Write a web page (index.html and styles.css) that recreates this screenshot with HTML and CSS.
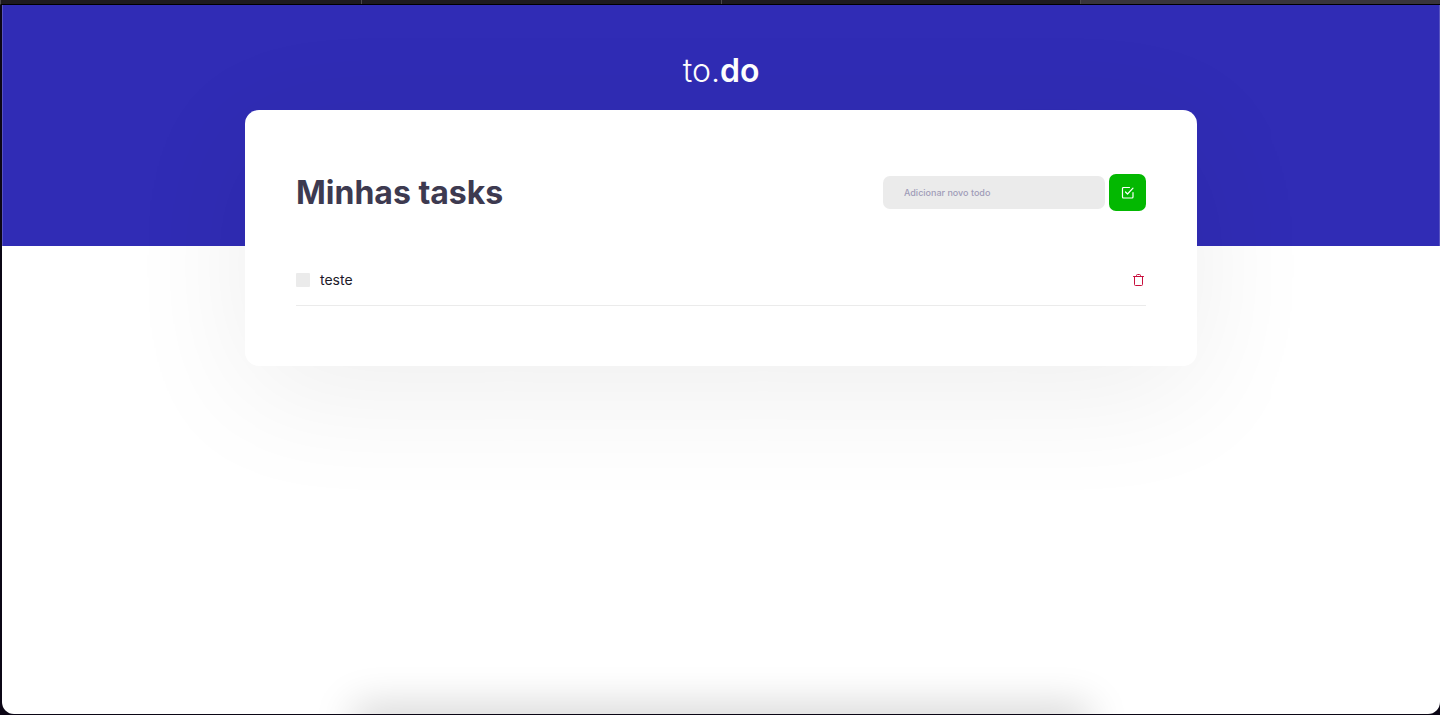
FILE: index.html
```html
<!DOCTYPE html>
<html lang="pt-BR">
<head>
<meta charset="utf-8">
<meta name="viewport" content="width=device-width, initial-scale=1">
<title>to.do</title>
<link rel="stylesheet" href="styles.css">
</head>
<body>
<div class="window">
  <div class="tabs"><span class="tab"></span><span class="tab"></span><span class="tab"></span><span class="tab tab-active"></span></div>
  <div class="page">
    <header class="header"><div class="logo">to.<strong>do</strong></div></header>
    <main class="card">
      <div class="card-head">
        <h1 class="title">Minhas tasks</h1>
        <form class="form">
          <input class="field" type="text" placeholder="Adicionar novo todo" aria-label="Adicionar novo todo">
          <button class="add" type="button" aria-label="Adicionar">
            <svg width="13" height="13" viewBox="0 0 13 13" fill="none" stroke="currentColor" stroke-width="1.2" stroke-linecap="round" stroke-linejoin="round"><path d="M4.5 6l2 2L12 2.2"/><path d="M12 6.5v4.5a1 1 0 0 1-1 1H2.500a1 1 0 0 1-1-1V2.500a1 1 0 0 1 1-1h6"/></svg>
          </button>
        </form>
      </div>
      <ul class="list">
        <li class="item">
          <label class="task"><input class="check" type="checkbox"><span>teste</span></label>
          <button class="remove" type="button" aria-label="Remover">
            <svg width="14" height="14" viewBox="0 0 14 14" fill="none" stroke="currentColor" stroke-width="1" stroke-linecap="round" stroke-linejoin="round"><path d="M1.500 3.500h10"/><path d="M2.500 3.500v8a1 1 0 0 0 1 1h6a1 1 0 0 0 1-1v-8"/><path d="M4.500 3.500v-1a1 1 0 0 1 1-1h2a1 1 0 0 1 1 1v1"/></svg>
          </button>
        </li>
      </ul>
    </main>
    <div class="dock-shadow"></div>
  </div>
</div>
</body>
</html>
```
FILE: styles.css
```css
* { box-sizing: border-box; }
body {
  margin: 0;
  background: #0b0615;
  font-family: Inter, "Open Sans", sans-serif;
}
.window {
  display: flex;
  flex-direction: column;
  height: 100vh;
  padding-bottom: 1px;
}
.tabs {
  display: grid;
  grid-template-columns: repeat(4, 1fr);
  flex: none;
  height: 5px;
  border-left: 1px solid #4b484e;
  border-bottom: 1px solid #000;
  background: #1e1b20;
}
.tab + .tab { border-left: 1px solid #4b484e; }
.tab-active { background: #39353c; }
.page {
  position: relative;
  flex: 1;
  margin-left: 2px;
  overflow: hidden;
  background: #fff;
  border-radius: 0 0 12px 12px;
}
.header {
  height: 241px;
  padding-top: 46px;
  background: #302cb5;
  border-left: 1px solid #5753c0;
  border-right: 1px solid #5753c0;
  color: #fff;
  text-align: center;
}
.logo { font-size: 32px; line-height: 40px; font-weight: 300; }
.logo strong { font-weight: 600; }
.card {
  position: relative;
  width: calc(100% - 32px);
  max-width: 952px;
  margin: -136px auto 0;
  padding: 64px 51px 60px;
  background: #fff;
  border-radius: 14px;
  box-shadow: 0 26px 128px rgba(0, 0, 0, 0.07);
}
.card-head {
  display: flex;
  align-items: center;
  justify-content: space-between;
}
.title {
  margin: 0;
  font-size: 32px;
  line-height: 36px;
  font-weight: 700;
  color: #3d3a50;
}
.form { display: flex; align-items: center; gap: 4px; }
.field {
  width: 222px;
  height: 33px;
  padding: 0 21px;
  border: 0;
  border-radius: 7px;
  background: #ebebeb;
  font: 500 9px/16px Inter, "Open Sans", sans-serif;
  color: #3d3a50;
}
.field::placeholder { color: #a09cb8; opacity: 1; }
.add {
  display: grid;
  place-items: center;
  width: 37px;
  height: 37px;
  padding: 0;
  border: 0;
  border-radius: 7px;
  background: #03b801;
  color: #fff;
}
.list { margin: 44px 0 0; padding: 0; list-style: none; }
.item {
  display: flex;
  align-items: center;
  justify-content: space-between;
  height: 51px;
  border-bottom: 1px solid #ebebeb;
}
.task {
  display: flex;
  align-items: center;
  gap: 10px;
  font-size: 14px;
  line-height: 20px;
  color: #1b1929;
}
.check {
  appearance: none;
  width: 14px;
  height: 14px;
  margin: 0;
  border-radius: 1px;
  background: #ebebeb;
}
.check:checked { background: #03b801; }
.remove {
  display: grid;
  padding: 0;
  border: 0;
  background: none;
  color: #c80f3d;
}
.dock-shadow {
  position: absolute;
  left: 25%;
  right: 25%;
  bottom: -20px;
  height: 20px;
  box-shadow: 0 0 40px 8px rgba(0, 0, 0, 0.18);
}
```
